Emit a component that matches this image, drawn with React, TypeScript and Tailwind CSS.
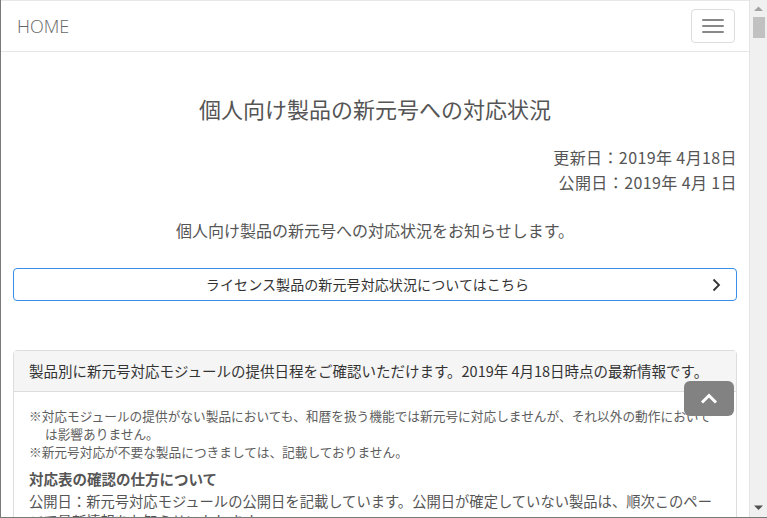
import React from "react";

const notes = [
  "※対応モジュールの提供がない製品においても、和暦を扱う機能では新元号に対応しませんが、それ以外の動作においては影響ありません。",
  "※新元号対応が不要な製品につきましては、記載しておりません。",
];

function Scrollbar() {
  return (
    <div className="flex w-[18px] shrink-0 flex-col items-center border-l border-[#e3e3e3] bg-[#f0f0f0]">
      <svg width="9" height="6" viewBox="0 0 9 6" className="mt-[6px]">
        <path d="M0 5 L4.5 0.5 L9 5 Z" fill="#a3a3a3" />
      </svg>
      <div className="mt-[5px] h-[21px] w-[12px] bg-[#c1c1c1]" />
      <div className="flex-1" />
      <svg width="9" height="6" viewBox="0 0 9 6" className="mb-[6px]">
        <path d="M0 0.5 L4.5 5 L9 0.5 Z" fill="#505050" />
      </svg>
    </div>
  );
}

export default function App() {
  return (
    <div className="flex h-[518px] w-[767px] overflow-hidden border-b border-l border-[#7a7a7a] bg-white font-['Noto_Sans_CJK_JP','Noto_Sans',sans-serif] text-[#555]">
      <div className="relative min-w-0 flex-1 overflow-hidden">
        {/* ナビゲーション */}
        <nav className="flex h-[52px] items-center justify-between border-y border-[#e7e7e7] pl-[16px] pr-[14px]">
          <span className="font-['Open_Sans',sans-serif] text-[18px] font-light leading-none text-[#666]">
            HOME
          </span>
          <button
            type="button"
            className="flex h-[34px] w-[44px] flex-col items-center justify-center gap-[4px] rounded-[4px] border border-[#ddd]"
          >
            <span className="block h-[2px] w-[22px] rounded-[1px] bg-[#888]" />
            <span className="block h-[2px] w-[22px] rounded-[1px] bg-[#888]" />
            <span className="block h-[2px] w-[22px] rounded-[1px] bg-[#888]" />
          </button>
        </nav>

        <main className="px-3">
          <h1 className="mt-[44px] text-center text-[22px] leading-[24px] text-[#555]">
            個人向け製品の新元号への対応状況
          </h1>

          <div className="mt-[25px] text-right text-[16px] leading-[25px] tracking-[0.4px]">
            <p>更新日：2019年 4月18日</p>
            <p>公開日：2019年 4月 1日</p>
          </div>

          <p className="mt-[23px] text-center text-[16px] leading-[25px]">
            個人向け製品の新元号への対応状況をお知らせします。
          </p>

          <a
            href="#"
            className="relative mt-[25px] flex h-[33px] items-center justify-center rounded-[4px] border border-[#3a8ee6] pr-[15px] text-[14px] tracking-[0.1px] text-[#333]"
          >
            ライセンス製品の新元号対応状況についてはこちら
            <svg
              width="9"
              height="14"
              viewBox="0 0 9 14"
              className="absolute right-[15px] top-[9px]"
            >
              <path d="M1.5 1.5 L7 7 L1.5 12.5" fill="none" stroke="#333" strokeWidth="1.8" />
            </svg>
          </a>

          <section className="mt-[49px] rounded-[4px] border border-[#ddd]">
            <div className="flex h-[41px] items-center border-b border-[#ddd] bg-[#f5f5f5] px-[15px] text-[14.5px] text-[#333]">
              製品別に新元号対応モジュールの提供日程をご確認いただけます。2019年 4月18日時点の最新情報です。
            </div>
            <div className="px-[15px] pt-[15px]">
              {notes.map((n) => (
                <p key={n} className="pl-4 -indent-4 text-[12.7px] leading-[18px] text-[#5e5e5e]">
                  {n}
                </p>
              ))}
              <h2 className="mt-[8px] text-[14.5px] font-bold leading-[20px] text-[#555]">
                対応表の確認の仕方について
              </h2>
              <p className="mt-[2px] text-[14.3px] leading-[20px] text-[#555]">
                公開日：新元号対応モジュールの公開日を記載しています。公開日が確定していない製品は、順次このページで最新情報をお知らせいたします。
              </p>
            </div>
          </section>
        </main>

        {/* ページトップへ */}
        <button
          type="button"
          className="absolute left-[683px] top-[381px] flex h-[35px] w-[50px] items-center justify-center rounded-[6px] bg-[#828282]"
        >
          <svg width="18" height="11" viewBox="0 0 18 11">
            <path d="M2 9.5 L9 2.5 L16 9.5" fill="none" stroke="#fff" strokeWidth="3" />
          </svg>
        </button>
      </div>
      <Scrollbar />
    </div>
  );
}
